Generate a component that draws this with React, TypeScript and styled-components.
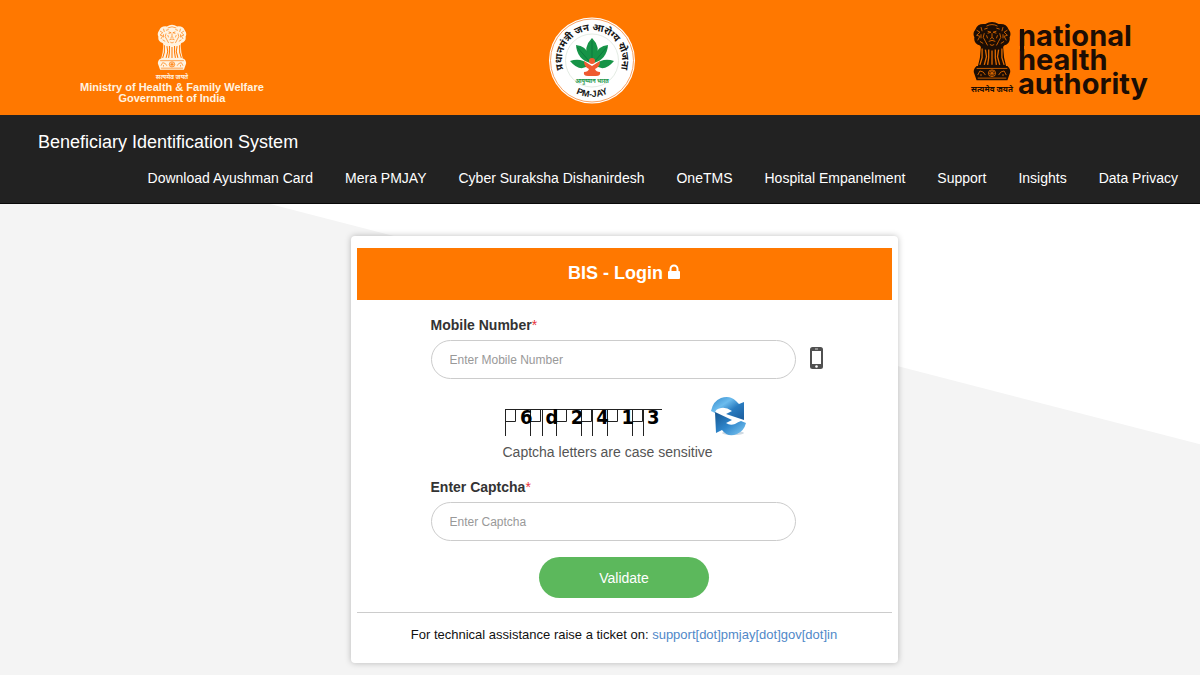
import React, { useState } from 'react';
import styled, { createGlobalStyle } from 'styled-components';

const GlobalStyle = createGlobalStyle`
  *, *::before, *::after { box-sizing: border-box; }
  body {
    margin: 0;
    background: #f4f4f4;
    color: #333;
    font: 14px/20px "Liberation Sans", Arial, sans-serif;
  }
`;

const Page = styled.div`
  display: flex;
  flex-direction: column;
  min-height: 100vh;
`;

const Banner = styled.header`
  display: grid;
  grid-template-columns: 1fr auto 1fr;
  align-items: start;
  padding: 16px 48px 10px 32px;
  background: #ff7800;
`;

const Ministry = styled.div`
  justify-self: start;
  display: flex;
  flex-direction: column;
  align-items: center;
  margin-left: 48px;
  padding-top: 8px;
  color: #fff3e0;
  font-size: 11px;
  font-weight: bold;
  line-height: 11px;
  text-align: center;
`;

const EmblemArt = styled.svg`
  display: block;
`;

const SchemeLogo = styled.svg`
  display: block;
  width: 88px;
  height: 89px;
`;

const Authority = styled.div`
  justify-self: end;
  display: flex;
  gap: 4px;
  padding-top: 5px;
  color: #1c0d04;
`;

const AuthorityMark = styled.svg`
  display: block;
  width: 134px;
  height: 84px;
  overflow: visible;
`;

const NavBar = styled.nav`
  padding: 12px 22px 10px 38px;
  background: #222;
  border-bottom: 1px solid #090909;
  color: #fff;
`;

const Brand = styled.a`
  display: block;
  width: max-content;
  font-size: 18px;
  line-height: 30px;
  color: #fff;
  text-decoration: none;
`;

const NavLinks = styled.ul`
  display: flex;
  flex-wrap: wrap;
  justify-content: flex-end;
  gap: 4px 32px;
  margin: 0;
  padding: 11px 0 5px;
  list-style: none;
`;

const NavLink = styled.a`
  color: #fff;
  text-decoration: none;
`;

const Main = styled.main`
  position: relative;
  flex: 1;
  display: flex;
  justify-content: center;
  align-items: flex-start;
  padding: 32px 0 11px 48px;

  &::before {
    content: '';
    position: absolute;
    inset: 0;
    background: #fff;
    clip-path: polygon(22.5% 0, 100% 0, 100% 51%);
  }
`;

const Card = styled.form`
  position: relative;
  width: 547px;
  max-width: 100%;
  padding: 12px 6px 18px;
  background: #fff;
  border-radius: 4px;
  box-shadow: 0 0 6px rgba(0, 0, 0, 0.25);
`;

const CardTitle = styled.h1`
  display: flex;
  justify-content: center;
  align-items: center;
  gap: 4px;
  margin: 0;
  padding: 15px 0 17px;
  background: #ff7800;
  color: #fff;
  font-size: 18px;
  line-height: 20px;
`;

const Fields = styled.div`
  display: flex;
  flex-direction: column;
  padding: 15px 68px 14px 74px;
`;

const Label = styled.label`
  align-self: flex-start;
  margin-bottom: 5px;
  font-weight: bold;
`;

const Required = styled.span`
  color: #e8323c;
  font-weight: normal;
`;

const InputRow = styled.div`
  display: flex;
  align-items: center;
  gap: 14px;
`;

const PhoneIcon = styled.svg`
  margin-bottom: 4px;
`;

const TextInput = styled.input`
  width: 365px;
  height: 39px;
  padding: 0 18px;
  border: 1px solid #ccc;
  border-radius: 20px;
  background: #fff;
  color: #555;
  font: 12px/20px "Liberation Sans", Arial, sans-serif;

  &::placeholder { color: #999; opacity: 1; }
`;

const CaptchaRow = styled.div`
  display: flex;
  align-items: center;
  gap: 47px;
  padding: 17px 0 6px 73px;
`;

const RefreshButton = styled.button`
  padding: 0;
  border: 0;
  background: none;
  line-height: 0;
  cursor: pointer;
`;

const Hint = styled.p`
  margin: 0 0 15px;
  padding-left: 72px;
  color: #555;
`;

const Actions = styled.div`
  display: flex;
  justify-content: center;
  padding: 16px 6px 0 0;
`;

const Submit = styled.button`
  width: 170px;
  height: 41px;
  border: 0;
  border-radius: 21px;
  background: #5cb85c;
  color: #fff;
  font: 14px/20px "Liberation Sans", Arial, sans-serif;
  cursor: pointer;
`;

const Support = styled.p`
  margin: 0;
  padding-top: 12px;
  border-top: 1px solid #ccc;
  color: #111;
  font-size: 13px;
  text-align: center;
`;

const SupportLink = styled.a`
  color: #5088c8;
  text-decoration: none;
`;

const links = [
  'Download Ayushman Card',
  'Mera PMJAY',
  'Cyber Suraksha Dishanirdesh',
  'OneTMS',
  'Hospital Empanelment',
  'Support',
  'Insights',
  'Data Privacy',
];

const hindi = '"Noto Sans Devanagari", "Noto Sans", FreeSans, sans-serif';

function Emblem({ width, height, ground }: { width: number; height: number; ground: string }) {
  return (
    <EmblemArt width={width} height={height} viewBox="0 0 44 75" role="img" aria-label="State Emblem of India">
      <g transform="translate(-2.2 0) scale(1.1 1.02)">
        <g fill="currentColor">
          <path d="M16 3q6-4 12 0 7-1 9 5 3 4 1 8 1 6-5 8-2 4-6 4H17q-4 0-6-4-6-2-5-8-2-4 1-8 2-6 9-5z" />
          <path d="M12 24h20l1 12 2 9H9l2-9z" />
          <path d="M8 44h28q4 4 2 8l-2 6H8l-2-6q-2-4 2-8z" />
        </g>
        <g fill="none" stroke={ground} strokeWidth=".8">
          <path d="M17 5q5-3 10 0M15 8l3-1M29 8l-3-1M18 10l3 1-3 1M26 10l-3 1 3 1M22 12v4l-2 2M22 16l2 2M19 20l3-1 3 1M17 14l1 3M27 14l-1 3M20 23l2 1 2-1M15 12l-1 4 2 4 2 4M29 12l1 4-2 4-2 4" />
          <path d="M8 9l3 2-3 3 3 1-2 4M36 9l-3 2 3 3-3 1 2 4M11 20l3 2M33 20l-3 2M12 6l1 4M32 6l-1 4M12 13v4M32 13v4" />
          <path d="M13 27v9l-2 7M16 28l1 7-2 8M19 28v8l-1 7M25 28v8l1 7M28 28l-1 7 2 8M31 27v9l2 7M22 29v14" strokeWidth="1.2" />
          <path d="M8 46.500h28M9 56h26" />
          <circle cx="22" cy="51.200" r="3.300" />
          <path d="M22 48v6.500M19 51.200h6M20 49l4 4.500M24 49l-4 4.500M9 53l2-4 3 1 2 3M35 53l-2-4-3 1-2 3M12 54v-2M32 54v-2" />
        </g>
      </g>
      <text x="22" y="71" fill="currentColor" fontFamily={hindi} fontSize="8" fontWeight="bold" textAnchor="middle">
        सत्यमेव जयते
      </text>
    </EmblemArt>
  );
}

function PmjayLogo() {
  return (
    <SchemeLogo viewBox="0 0 88 89" role="img" aria-label="PM-JAY">
      <defs>
        <path id="upperArc" d="M15.800 54.800A30 30 0 1 1 72.200 54.800" />
        <path id="lowerArc" d="M7.500 44.500A36.500 36.500 0 0 0 80.500 44.500" />
      </defs>
      <circle cx="44" cy="44.500" r="43" fill="#fff" />
      <circle cx="44" cy="44.500" r="41.500" fill="none" stroke="#f58a3c" strokeWidth=".8" />
      <circle cx="44" cy="44.500" r="26.500" fill="none" stroke="#e4ece4" strokeWidth="1" />
      <text fill="#151515" fontFamily={hindi} fontSize="9.800" fontWeight="bold" textAnchor="middle">
        <textPath href="#upperArc" startOffset="50%">प्रधानमंत्री जन आरोग्य योजना</textPath>
      </text>
      <g fill="#169447">
        <path d="M44 22q-9 9-4 20l4 5 4-5q5-11-4-20z" />
        <path d="M28 29q10 1 13 10l1 8q-13-4-14-18z" />
        <path d="M60 29q-10 1-13 10l-1 8q13-4 14-18z" />
        <path d="M22 45q11-4 19 4-9 8-19-4z" />
        <path d="M66 45q-11-4-19 4 9 8 19-4z" />
      </g>
      <path d="M44 25v20M29 31l12 14M59 31L47 45" fill="none" stroke="#08713a" strokeWidth=".7" />
      <g fill="#ef5a30">
        <circle cx="44" cy="45" r="3" />
        <path d="M36 45l8 5 8-5q0 6-5 8 1 3 5 3 1 4-4 4h-8q-5 0-4-4 4 0 5-3-5-2-5-8z" />
      </g>
      <text x="44" y="67" fill="#169447" fontFamily={hindi} fontSize="5.500" fontWeight="bold" textAnchor="middle">
        आयुष्मान भारत
      </text>
      <text fill="#151515" fontFamily="Liberation Sans" fontSize="9" fontWeight="bold" textAnchor="middle">
        <textPath href="#lowerArc" startOffset="50%">PM-JAY</textPath>
      </text>
    </SchemeLogo>
  );
}

function Captcha() {
  const boxes = [0, 25, 51, 76, 102, 127];
  const stems = [0, 25, 37, 51, 76, 87, 102, 127, 138];
  return (
    <svg width="160" height="40" viewBox="0 -1 160 40" role="img" aria-label="Captcha">
      <g fill="none" stroke="#222" strokeWidth="1">
        <path d="M1 12.500h157" />
        {boxes.map((x) => (
          <path key={x} d={`M${x + 1.5} 24.500h10v-12`} />
        ))}
        {stems.map((x) => (
          <path key={x} d={`M${x + 1.5} 12v27`} />
        ))}
      </g>
      <g fontFamily="DejaVu Sans Condensed, DejaVu Sans" fontSize="20" fontWeight="bold" fill="#000">
        {['6', 'd', '2', '4', '1', '3'].map((c, i) => (
          <text key={c} x={16 + i * 25.4} y="27">{c}</text>
        ))}
      </g>
    </svg>
  );
}

function RefreshIcon() {
  return (
    <svg width="38" height="40" viewBox="0 0 38 40" aria-hidden="true">
      <defs>
        <linearGradient id="blueTop" x1="0" y1="0" x2="1" y2="1">
          <stop offset="0" stopColor="#2f86c8" />
          <stop offset=".35" stopColor="#6cbcee" />
          <stop offset=".6" stopColor="#2a7cc0" />
          <stop offset="1" stopColor="#1b5c9c" />
        </linearGradient>
        <linearGradient id="blueBottom" x1="0" y1="0" x2="1" y2="1">
          <stop offset="0" stopColor="#14548f" />
          <stop offset=".5" stopColor="#2f86cb" />
          <stop offset="1" stopColor="#83ccf5" />
        </linearGradient>
      </defs>
      <ellipse cx="22" cy="37" rx="11" ry="2" fill="#cfd9e2" />
      <path d="M0 15Q2 5 10 2q9-3 15 3l3 3 5-2v18l-18-6 6-3q-6-4-11-3-6 1-6 5z" fill="url(#blueTop)" />
      <path d="M4 16l17 8-6 3q4 3 9 1 3-2 6-3l5 2q-2 8-9 11-9 4-15-4l-6 3z" fill="url(#blueBottom)" />
    </svg>
  );
}

export default function App() {
  const [mobile, setMobile] = useState('');
  const [captcha, setCaptcha] = useState('');

  return (
    <Page>
      <GlobalStyle />
      <Banner>
        <Ministry>
          <Emblem width={34} height={58} ground="#ff7800" />
          <span>Ministry of Health &amp; Family Welfare</span>
          <span>Government of India</span>
        </Ministry>
        <PmjayLogo />
        <Authority>
          <Emblem width={44} height={75} ground="#e06a00" />
          <AuthorityMark viewBox="0 0 134 84" role="img" aria-label="National Health Authority">
            <path d="M2 8h4v22H2z" fill="currentColor" />
            <g fill="currentColor" fontFamily="Inter" fontSize="29" fontWeight="700">
              <text x="0" y="25">national</text>
              <text x="0" y="49">health</text>
              <text x="0" y="73">authority</text>
            </g>
          </AuthorityMark>
        </Authority>
      </Banner>
      <NavBar>
        <Brand href="#">Beneficiary Identification System</Brand>
        <NavLinks>
          {links.map((text) => (
            <li key={text}>
              <NavLink href="#">{text}</NavLink>
            </li>
          ))}
        </NavLinks>
      </NavBar>
      <Main>
        <Card onSubmit={(e: React.FormEvent) => e.preventDefault()}>
          <CardTitle>
            BIS - Login
            <svg width="13" height="18" viewBox="0 0 13 18" aria-hidden="true">
              <rect x="1" y="7" width="12" height="8" rx="1" fill="#fff" />
              <path d="M3.500 8V5a3.500 3.500 0 0 1 7 0v3" fill="none" stroke="#fff" strokeWidth="2" />
            </svg>
          </CardTitle>
          <Fields>
            <Label htmlFor="mobile">
              Mobile Number<Required>*</Required>
            </Label>
            <InputRow>
              <TextInput id="mobile" type="tel" placeholder="Enter Mobile Number" value={mobile} onChange={(e) => setMobile(e.target.value)} />
              <PhoneIcon width="13" height="22" viewBox="0 0 13 22" aria-hidden="true">
                <rect width="13" height="22" rx="2.500" fill="#505050" />
                <rect x="2" y="4" width="9" height="13" fill="#fff" />
                <path d="M5 2h3" stroke="#ccc" strokeWidth="1" />
                <circle cx="6.500" cy="19.500" r="1.300" fill="#fff" />
              </PhoneIcon>
            </InputRow>
            <CaptchaRow>
              <Captcha />
              <RefreshButton type="button" aria-label="Refresh captcha">
                <RefreshIcon />
              </RefreshButton>
            </CaptchaRow>
            <Hint>Captcha letters are case sensitive</Hint>
            <Label htmlFor="captcha">
              Enter Captcha<Required>*</Required>
            </Label>
            <TextInput id="captcha" type="text" placeholder="Enter Captcha" value={captcha} onChange={(e) => setCaptcha(e.target.value)} />
            <Actions>
              <Submit type="submit">Validate</Submit>
            </Actions>
          </Fields>
          <Support>
            For technical assistance raise a ticket on: <SupportLink href="#">support[dot]pmjay[dot]gov[dot]in</SupportLink>
          </Support>
        </Card>
      </Main>
    </Page>
  );
}
